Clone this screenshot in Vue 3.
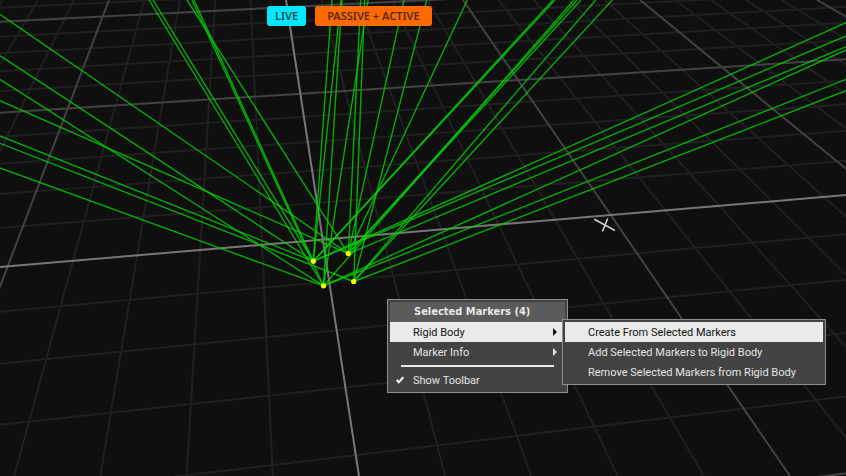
<script setup>
// Floor grid: every fifth line is a major one, line 0 is the axis.
const kind = (n) => (n === 0 ? 'axis' : n % 5 === 0 ? 'major' : 'minor')

const range = (from, to) => Array.from({ length: to - from + 1 }, (_, i) => from + i)

const rows = range(-13, 5).map((n) => ({
  kind: kind(n),
  x1: 0,
  y1: (23.02 * n + 267) / (1 - 0.0696 * n),
  x2: 846,
  y2: (23.05 * n + 195) / (1 - 0.0689 * n),
}))

const columns = range(-13, 17).map((n) => ({
  kind: kind(n),
  x1: 286 + 35.4 * n,
  y1: 0,
  x2: 359 + 86.2 * n,
  y2: 476,
}))

const order = { minor: 0, major: 1, axis: 2 }
const grid = [...rows, ...columns].sort((a, b) => order[a.kind] - order[b.kind])

const markers = [
  { x: 313.3, y: 261.2 },
  { x: 348.3, y: 253.7 },
  { x: 323.5, y: 285.8 },
  { x: 353.7, y: 281.5 },
]

// Camera rays: [start x, start y, marker index]
const rays = [
  [0, 14.3, 1], [0, 55.7, 0], [0, 79.3, 2], [0, 100.7, 1],
  [0, 136, 0], [0, 143.3, 3], [0, 168, 2],
  [149, 0, 2], [153, 0, 0], [187, 0, 1], [192, 0, 2], [194, 0, 0],
  [332, 0, 0], [341, 0, 0], [342, 0, 2], [360.7, 0, 1], [364.7, 0, 3],
  [368, 0, 2], [404, 0, 1], [426.7, 0, 3], [467.3, 0, 1],
  [553, 0, 0], [555, 0, 0], [574, 0, 2], [577, 0, 1], [581, 0, 1],
  [595.7, 0, 3], [612.3, 0, 3],
  [846, 22.7, 0], [846, 36, 0], [846, 46.7, 1], [846, 50, 2],
  [846, 79.3, 2], [846, 90.7, 3],
]

const submenu = [
  'Create From Selected Markers',
  'Add Selected Markers to Rigid Body',
  'Remove Selected Markers from Rigid Body',
]
</script>

<template>
  <main class="viewport">
    <svg class="scene" viewBox="0 0 846 476" preserveAspectRatio="xMinYMin slice" aria-hidden="true">
      <line
        v-for="(l, i) in grid" :key="'g' + i" :class="l.kind"
        :x1="l.x1" :y1="l.y1" :x2="l.x2" :y2="l.y2"
      />
      <path class="axis-mark" d="M594.3 219.3 L615 230.5 M607.7 218.5 L602.5 231.5" />
      <line
        v-for="(r, i) in rays" :key="'r' + i" class="ray"
        :x1="r[0]" :y1="r[1]" :x2="markers[r[2]].x" :y2="markers[r[2]].y"
      />
      <circle v-for="(m, i) in markers" :key="'m' + i" class="marker" :cx="m.x" :cy="m.y" r="2.6" />
    </svg>

    <div class="badges">
      <span class="badge live">LIVE</span>
      <span class="badge mode">PASSIVE + ACTIVE</span>
    </div>

    <div class="menu context">
      <h2 class="title">Selected Markers (4)</h2>
      <ul class="list">
        <li class="entry">
          <button class="item active" type="button" aria-haspopup="true" aria-expanded="true">
            Rigid Body
            <svg class="arrow" viewBox="0 0 4 8"><path d="M0 0 L4 4 L0 8 Z" /></svg>
          </button>
          <ul class="menu list sub">
            <li v-for="(label, i) in submenu" :key="label">
              <button class="item" :class="{ active: i === 0 }" type="button">{{ label }}</button>
            </li>
          </ul>
        </li>
        <li>
          <button class="item" type="button" aria-haspopup="true">
            Marker Info
            <svg class="arrow" viewBox="0 0 4 8"><path d="M0 0 L4 4 L0 8 Z" /></svg>
          </button>
        </li>
        <li class="separator" role="separator"></li>
        <li>
          <button class="item checked" type="button" aria-pressed="true">
            <svg class="check" viewBox="0 0 8 8"><path d="M0.7 3.8 L2.8 6.3 L7.3 1.2" /></svg>
            Show Toolbar
          </button>
        </li>
      </ul>
    </div>
  </main>
</template>

<style>
body {
  margin: 0;
  background: #0f0f0f;
}
</style>

<style scoped>
.viewport {
  position: relative;
  height: 100vh;
  overflow: hidden;
  background: #0f0f0f;
  font-family: Roboto, sans-serif;
  font-size: 11px;
}

.scene {
  display: block;
  width: 100%;
  height: 100%;
}

.minor {
  stroke: #202020;
  stroke-width: 2;
}

.major {
  stroke: #424242;
  stroke-width: 2;
}

.axis {
  stroke: #777;
  stroke-width: 2;
}

.axis-mark {
  fill: none;
  stroke: #d0d0d0;
  stroke-width: 1.6;
}

.ray {
  stroke: #00d200;
  stroke-opacity: 0.8;
  stroke-width: 1.4;
}

.marker {
  fill: #ff0;
}

.badges {
  position: absolute;
  top: 6px;
  left: 267px;
  display: flex;
  gap: 9px;
}

.badge {
  padding: 0 12px;
  border-radius: 3px;
  font: 600 11px/20px "Noto Sans", sans-serif;
}

.live {
  padding: 0 8px;
  background: #00e8ff;
  color: #0a4a52;
}

.mode {
  background: #ff6a00;
  color: #5a2a08;
}

.menu {
  box-sizing: border-box;
  padding: 2px;
  border: 1px solid #8f8f8f;
  background: #434343;
}

.context {
  position: absolute;
  top: 299px;
  left: 387px;
  width: 181px;
}

.title {
  margin: 0;
  padding-left: 24px;
  background: #5b5b5b;
  color: #e8e8e8;
  font: bold 11px/20px "DejaVu Sans Condensed", "DejaVu Sans", sans-serif;
}

.list {
  margin: 0;
  list-style: none;
}

.context > .list {
  padding: 0;
}

.entry {
  position: relative;
}

.context .sub {
  position: absolute;
  top: -3px;
  left: calc(100% - 3px);
  width: 264px;
}

.item {
  position: relative;
  display: flex;
  align-items: center;
  justify-content: space-between;
  width: 100%;
  height: 20px;
  padding: 0 8px 0 23px;
  border: 0;
  background: none;
  color: #e4e4e4;
  font: inherit;
  text-align: left;
  white-space: nowrap;
}

.item.active {
  background: #eaeaea;
  color: #111;
}

.arrow {
  width: 4px;
  height: 8px;
  fill: currentColor;
}

.checked {
  justify-content: flex-start;
}

.check {
  position: absolute;
  left: 6px;
  width: 8px;
  height: 8px;
  fill: none;
  stroke: #fff;
  stroke-width: 2;
}

.separator {
  height: 2px;
  margin: 3px 11px;
  background: #eaeaea;
}
</style>
